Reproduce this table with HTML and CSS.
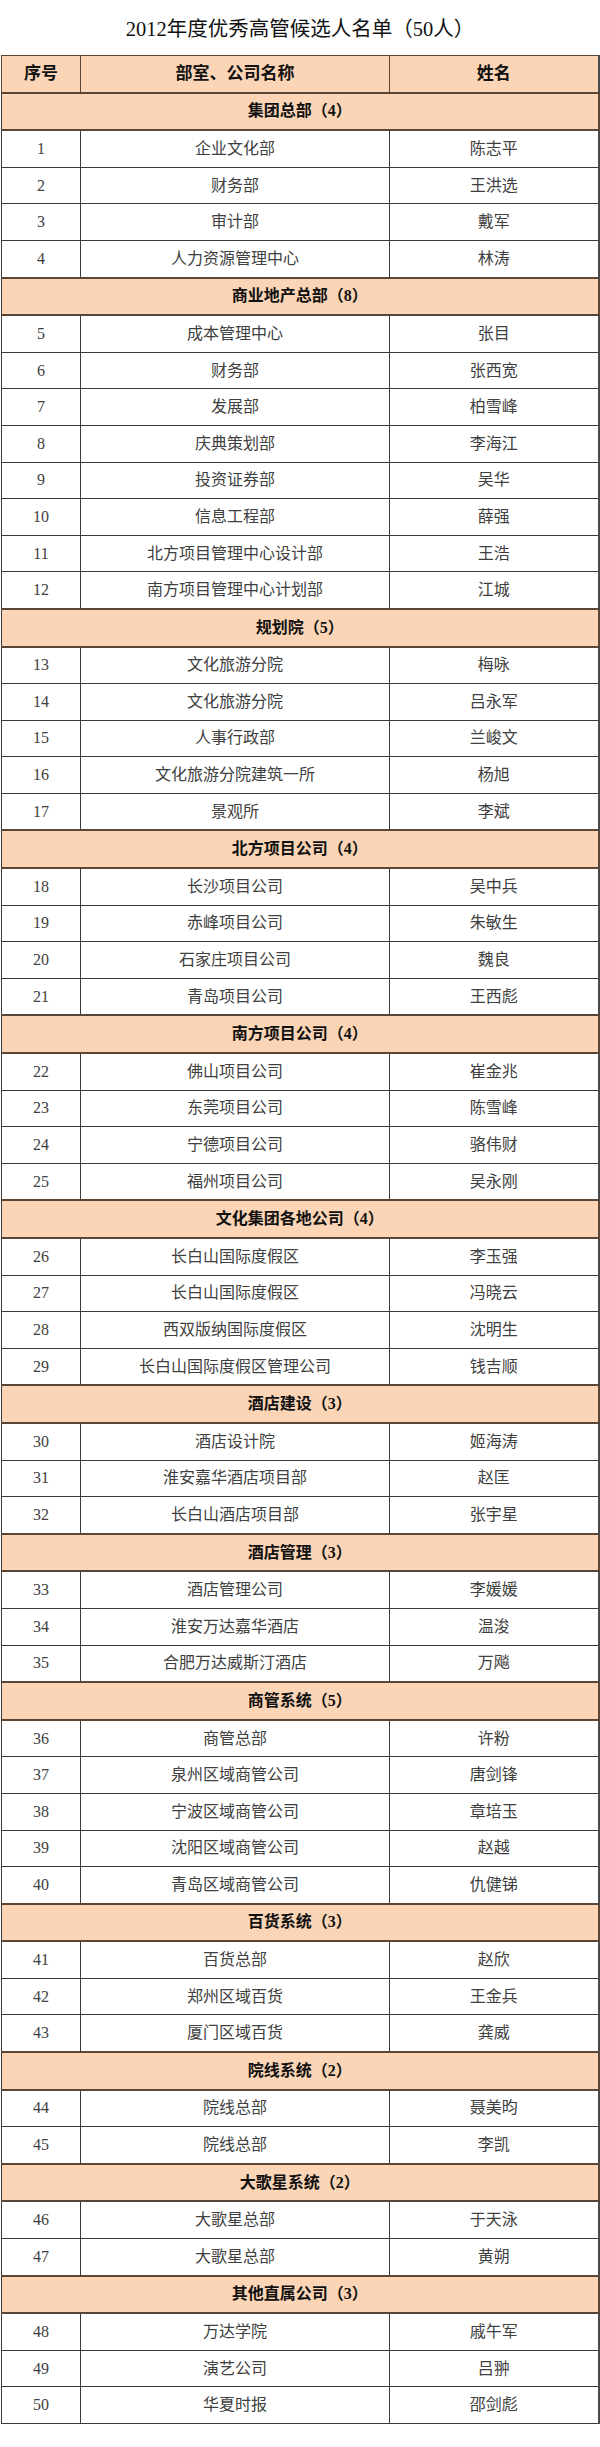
FILE: index.html
```html
<!DOCTYPE html>
<html lang="zh-CN">
<head>
<meta charset="utf-8">
<title>2012年度优秀高管候选人名单（50人）</title>
<link rel="stylesheet" href="styles.css">
</head>
<body>
<div class="page">
<h1 class="title">2012年度优秀高管候选人名单（50人）</h1>
<table class="list">
<colgroup><col class="c-no"><col class="c-dept"><col class="c-name"></colgroup>
<thead>
<tr class="head"><th>序号</th><th>部室、公司名称</th><th>姓名</th></tr>
</thead>
<tbody>
<tr class="sec"><td colspan="3">集团总部（4）</td></tr>
<tr><td>1</td><td>企业文化部</td><td>陈志平</td></tr>
<tr><td>2</td><td>财务部</td><td>王洪选</td></tr>
<tr><td>3</td><td>审计部</td><td>戴军</td></tr>
<tr><td>4</td><td>人力资源管理中心</td><td>林涛</td></tr>
<tr class="sec"><td colspan="3">商业地产总部（8）</td></tr>
<tr><td>5</td><td>成本管理中心</td><td>张目</td></tr>
<tr><td>6</td><td>财务部</td><td>张西宽</td></tr>
<tr><td>7</td><td>发展部</td><td>柏雪峰</td></tr>
<tr><td>8</td><td>庆典策划部</td><td>李海江</td></tr>
<tr><td>9</td><td>投资证券部</td><td>吴华</td></tr>
<tr><td>10</td><td>信息工程部</td><td>薛强</td></tr>
<tr><td>11</td><td>北方项目管理中心设计部</td><td>王浩</td></tr>
<tr><td>12</td><td>南方项目管理中心计划部</td><td>江城</td></tr>
<tr class="sec"><td colspan="3">规划院（5）</td></tr>
<tr><td>13</td><td>文化旅游分院</td><td>梅咏</td></tr>
<tr><td>14</td><td>文化旅游分院</td><td>吕永军</td></tr>
<tr><td>15</td><td>人事行政部</td><td>兰峻文</td></tr>
<tr><td>16</td><td>文化旅游分院建筑一所</td><td>杨旭</td></tr>
<tr><td>17</td><td>景观所</td><td>李斌</td></tr>
<tr class="sec"><td colspan="3">北方项目公司（4）</td></tr>
<tr><td>18</td><td>长沙项目公司</td><td>吴中兵</td></tr>
<tr><td>19</td><td>赤峰项目公司</td><td>朱敏生</td></tr>
<tr><td>20</td><td>石家庄项目公司</td><td>魏良</td></tr>
<tr><td>21</td><td>青岛项目公司</td><td>王西彪</td></tr>
<tr class="sec"><td colspan="3">南方项目公司（4）</td></tr>
<tr><td>22</td><td>佛山项目公司</td><td>崔金兆</td></tr>
<tr><td>23</td><td>东莞项目公司</td><td>陈雪峰</td></tr>
<tr><td>24</td><td>宁德项目公司</td><td>骆伟财</td></tr>
<tr><td>25</td><td>福州项目公司</td><td>吴永刚</td></tr>
<tr class="sec"><td colspan="3">文化集团各地公司（4）</td></tr>
<tr><td>26</td><td>长白山国际度假区</td><td>李玉强</td></tr>
<tr><td>27</td><td>长白山国际度假区</td><td>冯晓云</td></tr>
<tr><td>28</td><td>西双版纳国际度假区</td><td>沈明生</td></tr>
<tr><td>29</td><td>长白山国际度假区管理公司</td><td>钱吉顺</td></tr>
<tr class="sec"><td colspan="3">酒店建设（3）</td></tr>
<tr><td>30</td><td>酒店设计院</td><td>姬海涛</td></tr>
<tr><td>31</td><td>淮安嘉华酒店项目部</td><td>赵匡</td></tr>
<tr><td>32</td><td>长白山酒店项目部</td><td>张宇星</td></tr>
<tr class="sec"><td colspan="3">酒店管理（3）</td></tr>
<tr><td>33</td><td>酒店管理公司</td><td>李媛媛</td></tr>
<tr><td>34</td><td>淮安万达嘉华酒店</td><td>温浚</td></tr>
<tr><td>35</td><td>合肥万达威斯汀酒店</td><td>万飚</td></tr>
<tr class="sec"><td colspan="3">商管系统（5）</td></tr>
<tr><td>36</td><td>商管总部</td><td>许粉</td></tr>
<tr><td>37</td><td>泉州区域商管公司</td><td>唐剑锋</td></tr>
<tr><td>38</td><td>宁波区域商管公司</td><td>章培玉</td></tr>
<tr><td>39</td><td>沈阳区域商管公司</td><td>赵越</td></tr>
<tr><td>40</td><td>青岛区域商管公司</td><td>仇健锑</td></tr>
<tr class="sec"><td colspan="3">百货系统（3）</td></tr>
<tr><td>41</td><td>百货总部</td><td>赵欣</td></tr>
<tr><td>42</td><td>郑州区域百货</td><td>王金兵</td></tr>
<tr><td>43</td><td>厦门区域百货</td><td>龚威</td></tr>
<tr class="sec"><td colspan="3">院线系统（2）</td></tr>
<tr><td>44</td><td>院线总部</td><td>聂美昀</td></tr>
<tr><td>45</td><td>院线总部</td><td>李凯</td></tr>
<tr class="sec"><td colspan="3">大歌星系统（2）</td></tr>
<tr><td>46</td><td>大歌星总部</td><td>于天泳</td></tr>
<tr><td>47</td><td>大歌星总部</td><td>黄朔</td></tr>
<tr class="sec"><td colspan="3">其他直属公司（3）</td></tr>
<tr><td>48</td><td>万达学院</td><td>戚午军</td></tr>
<tr><td>49</td><td>演艺公司</td><td>吕翀</td></tr>
<tr><td>50</td><td>华夏时报</td><td>邵剑彪</td></tr>
</tbody>
</table>
</div>
</body>
</html>
```

FILE: styles.css
```css
html, body {
  margin: 0;
  padding: 0;
  background: #ffffff;
}

.page {
  width: 600px;
  font-family: "Liberation Serif", "Noto Sans CJK SC", serif;
  color: #333333;
}

.title {
  margin: 0;
  height: 55px;
  line-height: 58px;
  text-align: center;
  font-size: 20.5px;
  font-weight: normal;
  color: #111111;
}

.list {
  margin-left: 1px;
  width: 597px;
  border-collapse: collapse;
  table-layout: fixed;
}

.c-no { width: 79px; }
.c-dept { width: 309px; }
.c-name { width: 209px; }

.list th,
.list td {
  height: 35.6px;
  padding: 0;
  text-align: center;
  vertical-align: middle;
  border: 1px solid #3a3a3a;
  font-size: 16px;
  line-height: 20px;
}

.list tbody td {
  color: #404040;
}

.head th {
  background: #fbd5b5;
  color: #111111;
  font-weight: bold;
  font-size: 17px;
  border: 2px solid #5a4636;
  border-top-width: 1px;
  border-left-width: 1px;
  border-right-width: 1px;
}

.list tr > :last-child {
  border-right: 2px solid #4a4a4a;
}

.list .sec td {
  background: #fbd5b5;
  color: #111111;
  font-weight: bold;
  border-top: 2px solid #5a4636;
  border-bottom: 2px solid #5a4636;
  border-right: 2px solid #5a4636;
}
```
